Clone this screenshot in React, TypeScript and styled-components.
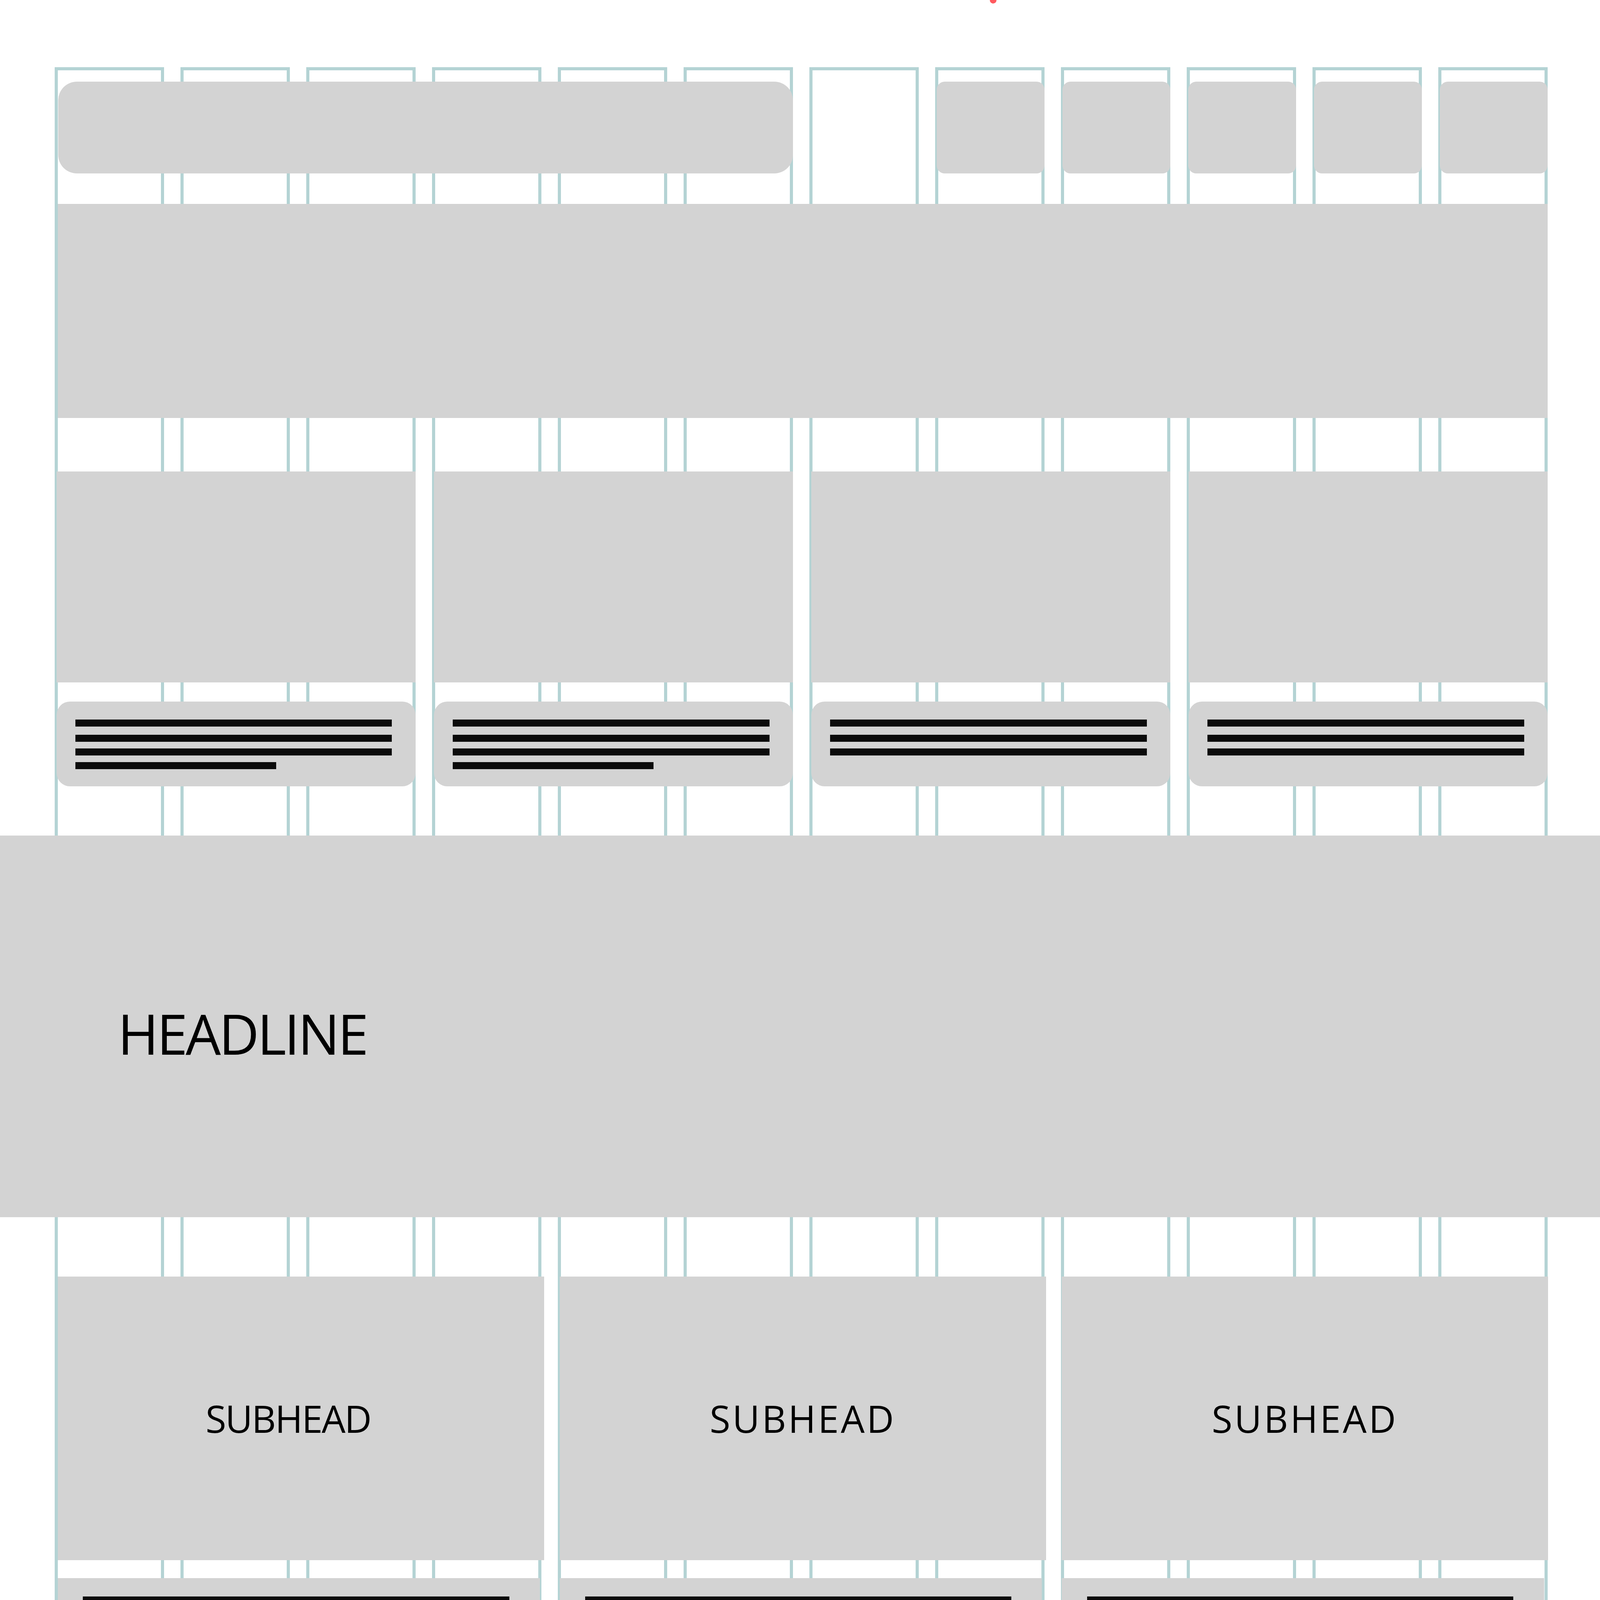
import React from 'react'
import styled, { createGlobalStyle } from 'styled-components'

// the layout is drawn on a 4800px wide artboard; every size scales with the viewport
const u = (n: number) => `calc(${n} * var(--u))`

const COL_W = 328
const GUTTER = 49.4

const cards = [
  { id: 1, lines: [950, 950, 950, 603] },
  { id: 2, lines: [950, 950, 950, 603] },
  { id: 3, lines: [950, 950, 950] },
  { id: 4, lines: [950, 950, 950] },
]

const features = [
  { id: 1, spacing: -3, offset: 76 },
  { id: 2, spacing: 6, offset: 0 },
  { id: 3, spacing: 6, offset: 0 },
]

const featureLines = [1279, 1279, 1279, 812]

const App = () => {
  return (
    <Page>
      <GlobalStyle />

      <ColumnGuides>
        {Array.from({ length: 12 }).map((_, i) => (
          <Guide key={i} />
        ))}
      </ColumnGuides>
      <Marker />

      <Content>
        <NavBar>
          <Logo />
          {[8, 9, 10, 11, 12].map((col) => (
            <NavItem key={col} $col={col} />
          ))}
        </NavBar>

        <Grid12>
          <Hero />
        </Grid12>

        <CardRow>
          {cards.map((card) => (
            <Card key={card.id}>
              <CardImage />
              <TextBlock $round $padLeft={56}>
                {card.lines.map((w, i) => (
                  <Line key={i} $w={w} />
                ))}
              </TextBlock>
            </Card>
          ))}
        </CardRow>

        <HeadlineBand>
          <Headline>HEADLINE</Headline>
        </HeadlineBand>

        <FeatureGrid>
          {features.map((f) => (
            <Feature key={f.id}>
              <SubheadBox $offset={f.offset}>
                <Subhead $spacing={f.spacing}>SUBHEAD</Subhead>
              </SubheadBox>
              <FeatureText $padLeft={76}>
                {featureLines.map((w, i) => (
                  <Line key={i} $w={w} />
                ))}
              </FeatureText>
              <FeatureImage />
            </Feature>
          ))}
        </FeatureGrid>
      </Content>
    </Page>
  )
}

export default App

// Styled Components

const GlobalStyle = createGlobalStyle`
  :root {
    --u: calc(100vw / 4800);
  }

  html, body {
    margin: 0;
    padding: 0;
    overflow: hidden;
    background: #ffffff;
  }

  body {
    font-family: 'Open Sans', 'Noto Sans', sans-serif;
  }
`

const Page = styled.div`
  position: relative;
  width: 100vw;
  height: 100vh;
  overflow: hidden;
  background: #ffffff;
`

const ColumnGuides = styled.div`
  position: absolute;
  top: ${u(202)};
  bottom: 0;
  left: ${u(164)};
  display: grid;
  grid-template-columns: repeat(12, ${u(COL_W)});
  column-gap: ${u(GUTTER)};
  pointer-events: none;
`

const Guide = styled.div`
  border: ${u(10)} solid #b4d3d4;
  border-bottom: none;
`

const Marker = styled.div`
  position: absolute;
  top: ${u(-10)};
  left: ${u(2969)};
  width: ${u(20)};
  height: ${u(20)};
  border-radius: 50%;
  background: #ff5a5f;
`

const Content = styled.div`
  position: relative;
  z-index: 1;
  box-sizing: border-box;
  height: 100%;
  display: flex;
  flex-direction: column;
  padding-top: ${u(245)};
`

const Grid12 = styled.div`
  display: grid;
  grid-template-columns: repeat(12, ${u(COL_W)});
  column-gap: ${u(GUTTER)};
  padding-left: ${u(164)};
`

const NavBar = styled(Grid12)`
  flex-shrink: 0;
  height: ${u(275)};
`

const Logo = styled.div`
  grid-column: 1 / span 6;
  margin-left: ${u(11)};
  background: #d3d3d3;
  border-radius: ${u(56)};
`

const NavItem = styled.div<{ $col: number }>`
  grid-column: ${(p) => p.$col};
  margin-left: ${u(4)};
  background: #d3d3d3;
  border-radius: ${u(24)};
`

const Hero = styled.div`
  grid-column: 1 / -1;
  margin: ${u(92)} 0 0 ${u(10)};
  height: ${u(642)};
  background: #d3d3d3;
`

const CardRow = styled(Grid12)`
  margin-top: ${u(161)};
`

const Card = styled.div`
  grid-column: span 3;
  margin-left: ${u(6)};
  display: flex;
  flex-direction: column;
  gap: ${u(58)};
`

const CardImage = styled.div`
  height: ${u(632)};
  background: #d3d3d3;
`

const TextBlock = styled.div<{ $round?: boolean; $padLeft: number }>`
  box-sizing: border-box;
  height: ${u(254)};
  flex-shrink: 0;
  padding: ${u(54)} 0 0 ${(p) => u(p.$padLeft)};
  display: flex;
  flex-direction: column;
  gap: ${u(20)};
  background: #d3d3d3;
  border-radius: ${(p) => (p.$round ? u(40) : '0')};
`

const Line = styled.div<{ $w: number }>`
  width: ${(p) => u(p.$w)};
  height: ${u(21)};
  flex-shrink: 0;
  background: #0b0b0b;

  &:first-child {
    margin-bottom: ${u(4)};
  }
`

const HeadlineBand = styled.div`
  box-sizing: border-box;
  flex-shrink: 0;
  width: 100%;
  height: ${u(1145)};
  margin-top: ${u(148)};
  padding: ${u(510)} 0 0 ${u(353)};
  background: #d3d3d3;
`

const Headline = styled.h1`
  margin: 0;
  font-family: 'Open Sans', 'Noto Sans', sans-serif;
  font-size: ${u(167)};
  font-weight: 400;
  line-height: 1;
  letter-spacing: ${u(-6)};
  color: #000000;
`

const FeatureGrid = styled.div`
  flex: 1;
  min-height: 0;
  display: grid;
  grid-template-columns: repeat(3, ${u(1459)});
  column-gap: ${u(47)};
  padding-left: ${u(173)};
  margin-top: ${u(178)};
`

const Feature = styled.div`
  display: flex;
  flex-direction: column;
  min-height: 0;
`

const SubheadBox = styled.div<{ $offset: number }>`
  box-sizing: border-box;
  flex-shrink: 0;
  height: ${u(850)};
  padding-right: ${(p) => u(p.$offset)};
  display: flex;
  align-items: center;
  justify-content: center;
  background: #d3d3d3;
`

const Subhead = styled.span<{ $spacing: number }>`
  font-family: 'Open Sans', 'Noto Sans', sans-serif;
  font-size: ${u(113)};
  font-weight: 400;
  line-height: 1;
  letter-spacing: ${(p) => u(p.$spacing)};
  color: #000000;
`

const FeatureText = styled(TextBlock)`
  margin: ${u(55)} ${u(12)} 0 0;
  padding-top: ${u(55)};
`

const FeatureImage = styled.div`
  flex: 1;
  min-height: 0;
  margin-top: ${u(100)};
  background: #d3d3d3;
`
